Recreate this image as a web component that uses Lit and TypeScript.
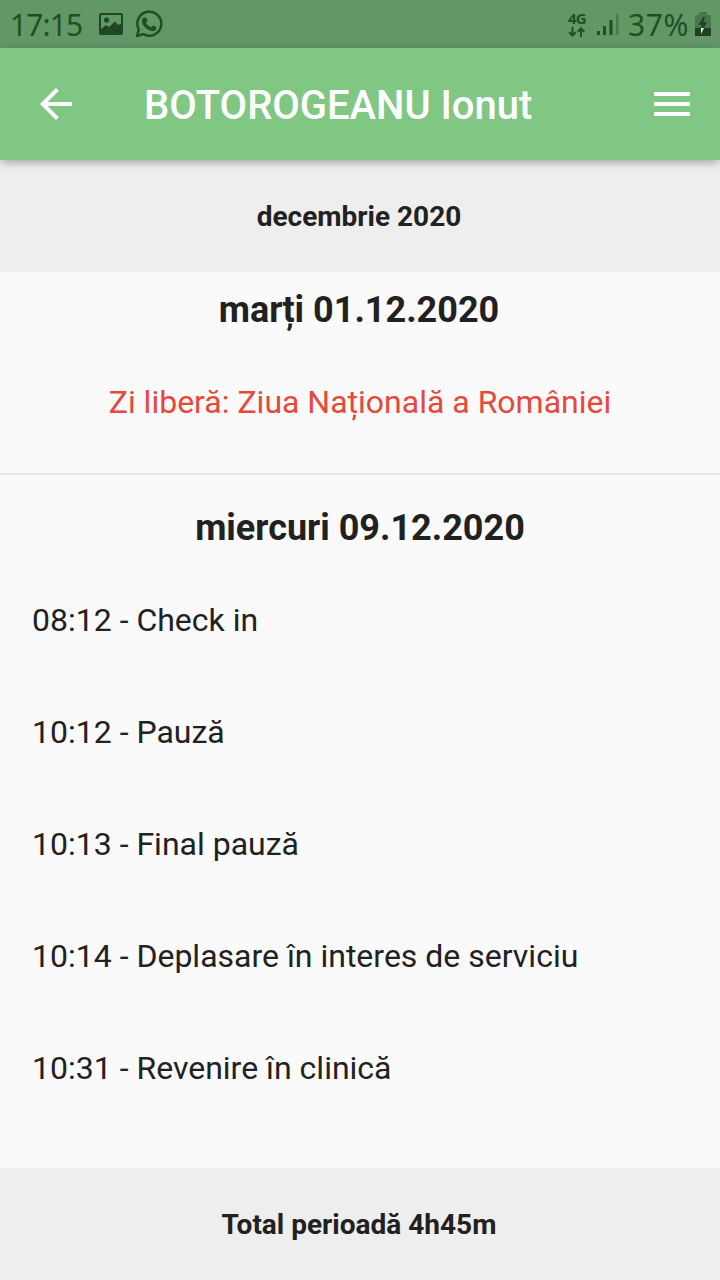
import { LitElement, html, css } from "lit";
import { customElement } from "lit/decorators.js";

const entries = [
  ["08:12", "Check in"],
  ["10:12", "Pauză"],
  ["10:13", "Final pauză"],
  ["10:14", "Deplasare în interes de serviciu"],
  ["10:31", "Revenire în clinică"],
];

@customElement("status-bar")
class StatusBar extends LitElement {
  static styles = css`
    :host {
      display: flex;
      align-items: center;
      height: 48px;
      box-sizing: border-box;
      padding: 0 9px 0 10px;
      background: #629766;
      color: #1f5023;
      font: 30px/48px "Noto Sans", sans-serif;
    }
    svg { display: block; flex: none; }
    .time { width: 88px; letter-spacing: -0.9px; padding-top: 1px; }
    .image { margin-right: 11px; }
    .spacer { flex: 1; }
    .network { display: grid; width: 20px; margin-right: 10px; justify-items: center; row-gap: 2px; }
    .kind { font: bold 15px/13px "Open Sans", sans-serif; letter-spacing: -0.8px; }
    .percent { margin: 0 3px 0 9px; width: 64px; white-space: nowrap; letter-spacing: 0.6px; padding-top: 1px; }
  `;
  render() {
    return html`
      <span class="time">17:15</span>
      <svg class="image" width="26" height="24" viewBox="0 0 26 24">
        <path fill="#214526" fill-rule="evenodd" d="M3 1H23Q25 1 25 3V21Q25 23 23 23H3Q1 23 1 21V3Q1 1 3 1ZM3 3V17L8 13L11 15L17 9.500L20 13L23 11.500V3Z"/>
        <circle cx="8.6" cy="8" r="2.6" fill="#214526"/>
      </svg>
      <svg width="28" height="28" viewBox="0 0 28 28">
        <path fill="none" stroke="#1f5023" stroke-width="2.5" stroke-linejoin="round" d="M2 26L3.8 19.4A12 12 0 1 1 8.4 24.1Z"/>
        <path fill="#1f5023" d="M9.3 7.5h1.200c.6 0 .8.4 1 .9l.9 2.200c.2.5-.1.9-1.300 2.300 1.400 2.200 2.800 3.400 5.200 4.400 1.300-1.800 1.600-2 2.100-1.800l2.500 1.200c.5.3.6.5.5 1.200-.3 2.100-2 3.200-4.100 3.200-4.700-.5-10-5.600-10.400-9.700 0-1.800.9-3.900 2.400-3.900Z"/>
      </svg>
      <span class="spacer"></span>
      <span class="network">
        <span class="kind">4G</span>
        <svg width="18" height="10" viewBox="0 0 18 10">
          <path fill="none" stroke="#1f5023" stroke-width="2" d="M4.500 0V8.500M1.200 5.200L4.500 8.500L7.800 5.200M13 10V1.500M9.700 4.800L13 1.500L16.300 4.800"/>
        </svg>
      </span>
      <svg width="22" height="24" viewBox="0 0 22 24">
        <path fill="#1f5023" d="M0 19h3v4H0zM6 14h3v9H6zM12.500 8h3v15h-3z"/>
        <path fill="#457d49" d="M19 2h2.500v21H19z"/>
      </svg>
      <span class="percent">37%</span>
      <svg width="16" height="24" viewBox="0 0 16 24">
        <path fill="#47774b" d="M4 0H12V3H16V16H0V3H4Z"/>
        <path fill="#203f25" d="M0 16H16V24H0Z"/>
        <path fill="#214526" d="M8 5L3.500 13H7L6 16H9L12 10H8.500L10 5Z"/>
        <path fill="#e8f3e8" d="M6 16H9L6 22Z"/>
      </svg>`;
  }
}

@customElement("app-root")
class AppRoot extends LitElement {
  static styles = css`
    :host {
      display: flex;
      flex-direction: column;
      height: 1280px;
      background: #fafafa;
      color: #212121;
      font: 32px/40px Roboto, sans-serif;
    }
    svg { display: block; flex: none; }
    .bar {
      display: flex;
      align-items: center;
      height: 112px;
      box-sizing: border-box;
      padding: 0 24px 0 32px;
      background: #81c784;
      color: #fff;
      z-index: 1;
      box-shadow: 0 4px 8px -2px rgba(0, 0, 0, 0.2), 0 2px 10px rgba(0, 0, 0, 0.16);
    }
    .title {
      flex: 1;
      margin: 0 0 0 64px;
      font-size: 40px;
      font-weight: 500;
      line-height: 48px;
      letter-spacing: -0.03px;
      padding-top: 4px;
      white-space: nowrap;
    }
    .band {
      display: flex;
      align-items: center;
      justify-content: center;
      height: 112px;
      box-sizing: border-box;
      padding: 2px 2px 0 0;
      flex: none;
      background: #eee;
      font-size: 28px;
      font-weight: 700;
    }
    .day { text-align: center; }
    .day h2 { margin: 0; font-size: 36px; line-height: 44px; font-weight: 700; }
    .free { padding-top: 16px; box-sizing: border-box; border-bottom: 2px solid #e8e8e8; height: 203px; }
    .free h2 { padding-right: 2px; }
    .holiday { margin: 50px 0 0; color: #e5493c; }
    .work { flex: 1; padding-top: 31px; }
    .list { list-style: none; margin: 14px 0 0; padding: 0 32px; text-align: left; }
    .list li { height: 112px; display: flex; align-items: center; }
  `;
  render() {
    return html`
      <status-bar></status-bar>
      <header class="bar">
        <svg width="48" height="48" viewBox="0 0 24 24" fill="#fff">
          <path d="M20 11H7.830l5.590-5.590L12 4l-8 8 8 8 1.410-1.410L7.830 13H20v-2z"/>
        </svg>
        <h1 class="title">BOTOROGEANU Ionut</h1>
        <svg width="48" height="48" viewBox="0 0 24 24" fill="#fff">
          <path d="M3 18h18v-2H3v2zm0-5h18v-2H3v2zm0-7v2h18V6H3z"/>
        </svg>
      </header>
      <div class="band">decembrie 2020</div>
      <section class="day free">
        <h2>marți 01.12.2020</h2>
        <p class="holiday">Zi liberă: Ziua Națională a României</p>
      </section>
      <section class="day work">
        <h2>miercuri 09.12.2020</h2>
        <ul class="list">
          ${entries.map(([time, label]) => html`<li>${time} - ${label}</li>`)}
        </ul>
      </section>
      <footer class="band">Total perioadă 4h45m</footer>`;
  }
}
